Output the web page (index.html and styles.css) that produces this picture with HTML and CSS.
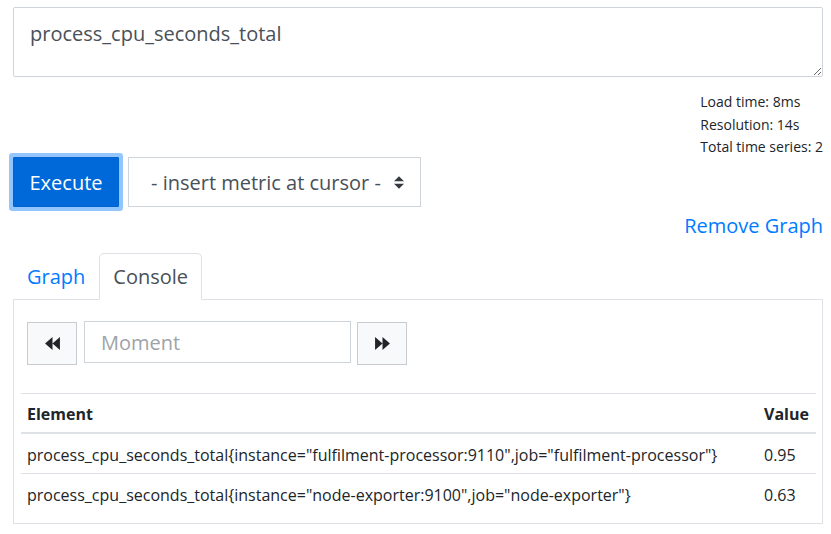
FILE: index.html
```html
<!DOCTYPE html>
<html>
<head>
<meta charset="utf-8">
<link rel="stylesheet" href="styles.css">
</head>
<body>
<div class="page">
  <textarea class="expr" spellcheck="false">process_cpu_seconds_total</textarea>
  <div class="stats-row">
    <div class="stats">
      <div>Load time: 8ms</div>
      <div>Resolution: 14s</div>
      <div>Total time series: 2</div>
    </div>
  </div>
  <div class="actions">
    <button class="btn-exec">Execute</button>
    <div class="metric-select">
      <span>- insert metric at cursor -</span>
      <svg class="sel-arrow" width="10" height="13" viewBox="0 0 4 5"><path d="M2 0L0 2h4zm0 5L0 3h4z" fill="#343a40"/></svg>
    </div>
  </div>
  <div class="remove-row"><a class="remove">Remove Graph</a></div>
  <ul class="tabs">
    <li class="tab">Graph</li>
    <li class="tab active">Console</li>
  </ul>
  <div class="panel">
    <div class="controls">
      <button class="nav-btn"><svg width="15" height="13" viewBox="0 0 16 14"><path d="M0 7L8 0V14Z M8 7L16 0V14Z" fill="#212529"/></svg></button>
      <input class="moment" placeholder="Moment">
      <button class="nav-btn"><svg width="15" height="13" viewBox="0 0 16 14"><path d="M16 7L8 0V14Z M8 7L0 0V14Z" fill="#212529"/></svg></button>
    </div>
    <table class="results">
      <thead>
        <tr><th>Element</th><th class="val-col">Value</th></tr>
      </thead>
      <tbody>
        <tr><td>process_cpu_seconds_total{instance="fulfilment-processor:9110",job="fulfilment-processor"}</td><td class="val-col">0.95</td></tr>
        <tr><td>process_cpu_seconds_total{instance="node-exporter:9100",job="node-exporter"}</td><td class="val-col">0.63</td></tr>
      </tbody>
    </table>
  </div>
</div>
</body>
</html>
```

FILE: styles.css
```css
* { box-sizing: border-box; }
body {
  margin: 0;
  font-family: "Open Sans", sans-serif;
  color: #212529;
  background: #fff;
}
.page {
  padding: 7px 8px 0 13px;
}
.expr {
  display: block;
  width: 100%;
  height: 70px;
  border: 1px solid #ced4da;
  border-radius: 2px;
  padding: 11px 16px;
  font-family: inherit;
  font-size: 20px;
  line-height: 30px;
  color: #495057;
  resize: vertical;
  outline: none;
}
.stats-row {
  display: flex;
  justify-content: flex-end;
  margin-top: 14px;
  height: 66px;
}
.stats {
  text-align: left;
  font-size: 14px;
  line-height: 22.5px;
}
.actions {
  display: flex;
  gap: 9px;
  height: 50px;
}
.btn-exec {
  width: 106px;
  height: 50px;
  background: #0069d9;
  border: 1px solid #0062cc;
  border-radius: 1px;
  box-shadow: 0 0 0 4px #93c5ff;
  color: #fff;
  font-family: inherit;
  font-size: 20px;
  padding: 0;
}
.metric-select {
  width: 293px;
  height: 50px;
  border: 1px solid #ced4da;
  display: flex;
  align-items: center;
  justify-content: space-between;
  padding: 0 16px 0 22px;
  font-size: 20px;
  color: #495057;
}
.remove-row {
  margin-top: 4px;
  text-align: right;
  font-size: 20px;
  line-height: 30px;
}
.remove { color: #007bff; }
.tabs {
  list-style: none;
  margin: 12px 0 0;
  padding: 0;
  display: flex;
  border-bottom: 1px solid #dee2e6;
}
.tab {
  padding: 8px 13px 7px;
  font-size: 20px;
  line-height: 30px;
  border: 1px solid transparent;
  border-radius: 5px 5px 0 0;
  margin-bottom: -1px;
  color: #007bff;
}
.tab.active {
  color: #495057;
  background: #fff;
  border-color: #dee2e6 #dee2e6 #fff;
}
.panel {
  border: 1px solid #dee2e6;
  border-top: 0;
  padding: 21px 13px 10px;
}
.controls {
  display: flex;
  align-items: flex-start;
}
.nav-btn {
  width: 50px;
  height: 43px;
  margin-top: 1px;
  background: #f8f9fa;
  border: 1px solid #c8cbcf;
  display: flex;
  align-items: center;
  justify-content: center;
  padding: 0;
}
.moment {
  width: 267px;
  height: 42px;
  margin: 0 6px 0 7px;
  border: 1px solid #ced4da;
  padding: 0 16px;
  font-family: inherit;
  font-size: 20px;
  color: #495057;
  outline: none;
}
.moment::placeholder { color: #9ea3a8; }
.results {
  margin: 28px 0 0 -6px;
  width: 795px;
  border-collapse: collapse;
  font-size: 16px;
  line-height: 24px;
}
.results th {
  text-align: left;
  font-weight: 700;
  padding: 7.5px 6px 6.5px;
  border-top: 1px solid #dee2e6;
  border-bottom: 2px solid #dee2e6;
}
.results td {
  padding: 8.5px 6px 6.5px;
  border-top: 1px solid #dee2e6;
}
.results .val-col { width: 58px; }
```
